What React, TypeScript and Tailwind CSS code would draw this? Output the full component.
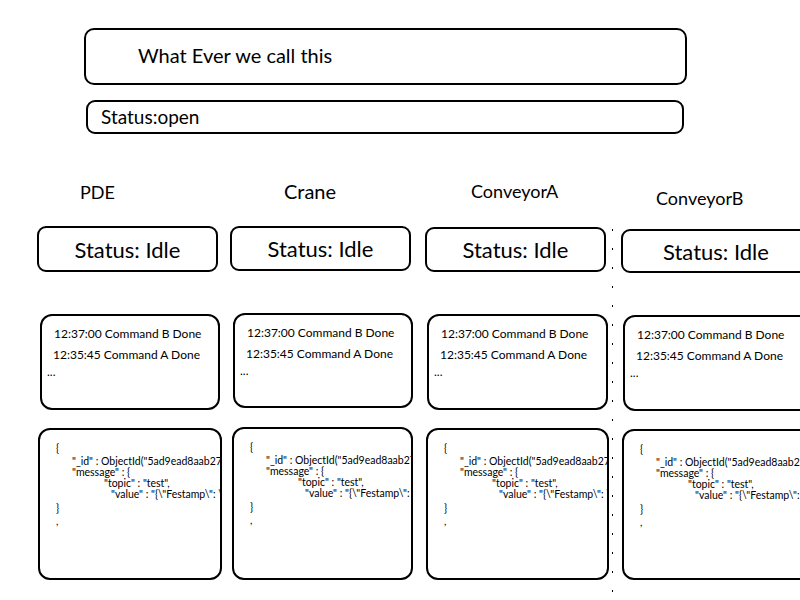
import React from 'react';

const font = { fontFamily: 'Lato, "Noto Sans", sans-serif' };

interface Machine {
  name: string;
  colClass: string;
  headerClass: string;
  statusClass: string;
  logClass: string;
  jsonClass: string;
}

const machines: Machine[] = [
  {
    name: 'PDE',
    colClass: 'ml-[37px] w-[185px]',
    headerClass: 'pl-[43px] pt-[183px] h-[226px] text-[18px]',
    statusClass: 'w-[181px] h-[46px]',
    logClass: 'ml-[3px] mt-[42px] w-[180px] h-[96px]',
    jsonClass: 'ml-[1px] mt-[18px] w-[184px] h-[152px]',
  },
  {
    name: 'Crane',
    colClass: 'ml-[8px] w-[183px]',
    headerClass: 'pl-[54px] pt-[181px] h-[226px] text-[20px]',
    statusClass: 'w-[181px] h-[45px]',
    logClass: 'ml-[3px] mt-[42px] w-[180px] h-[95px]',
    jsonClass: 'ml-[2px] mt-[19px] w-[181px] h-[153px]',
  },
  {
    name: 'ConveyorA',
    colClass: 'ml-[12px] w-[184px]',
    headerClass: 'pl-[46px] pt-[182px] h-[227px] text-[18px]',
    statusClass: 'w-[181px] h-[45px]',
    logClass: 'ml-[2px] mt-[42px] w-[181px] h-[96px]',
    jsonClass: 'ml-[1px] mt-[18px] w-[183px] h-[152px]',
  },
  {
    name: 'ConveyorB',
    colClass: 'ml-[8px] w-[200px]',
    headerClass: 'pl-[35px] pt-[189px] h-[229px] text-[18px]',
    statusClass: 'w-[190px] h-[44px]',
    logClass: 'ml-[2px] mt-[42px] w-[190px] h-[96px]',
    jsonClass: 'ml-[1px] mt-[18px] w-[190px] h-[151px]',
  },
];

const MachineColumn: React.FC<{ m: Machine }> = ({ m }) => (
  <div className={`flex flex-col shrink-0 ${m.colClass}`}>
    <div className={`leading-none text-black ${m.headerClass}`}>{m.name}</div>
    <div
      className={`flex items-center justify-center border-2 border-black rounded-[9px] text-[22px] text-black ${m.statusClass}`}
    >
      Status: Idle
    </div>
    <div className={`border-2 border-black rounded-[12px] text-[12px] text-black pl-[11px] pt-[7px] leading-[21px] ${m.logClass}`}>
      <div className="pl-[1px]">12:37:00 Command B Done</div>
      <div>12:35:45 Command A Done</div>
      <div className="-ml-[6px] leading-[14px]">...</div>
    </div>
    <div className={`border-2 border-black rounded-[12px] overflow-hidden text-[10.5px] text-black pt-[13px] leading-[11px] whitespace-nowrap ${m.jsonClass}`}>
      <div className="pl-[16px]">{'{'}</div>
      <div className="pl-[32px] mt-[2px]">"_id" : ObjectId("5ad9ead8aab278c</div>
      <div className="pl-[32px]">"message" : {'{'}</div>
      <div className="pl-[64px]">"topic" : "test",</div>
      <div className="pl-[71px]">"value" : "{'{'}\"Festamp\": \"</div>
      <div className="pl-[16px] mt-[3px]">{'}'}</div>
      <div className="pl-[16px] mt-[2px]">,</div>
    </div>
  </div>
);

export default function App() {
  return (
    <div className="relative w-[800px] h-[600px] overflow-hidden bg-white" style={font}>
      <div className="absolute left-0 top-0 flex flex-col">
        <div className="ml-[84px] mt-[28px] w-[603px] h-[57px] border-2 border-black rounded-[10px] flex items-center pl-[52px] pb-[4px] text-[20px] text-black">
          What Ever we call this
        </div>
        <div className="ml-[86px] mt-[15px] w-[598px] h-[34px] border-2 border-black rounded-[9px] flex items-center pl-[13px] text-[19px] text-black">
          Status:open
        </div>
      </div>
      <div className="flex items-start">
        {machines.slice(0, 3).map((m) => (
          <MachineColumn key={m.name} m={m} />
        ))}
        <div className="shrink-0 ml-[3px] mt-[229px] w-[1px] h-[371px] bg-[repeating-linear-gradient(to_bottom,#000_0_2px,transparent_2px_19px)]" />
        <MachineColumn m={machines[3]} />
      </div>
    </div>
  );
}
